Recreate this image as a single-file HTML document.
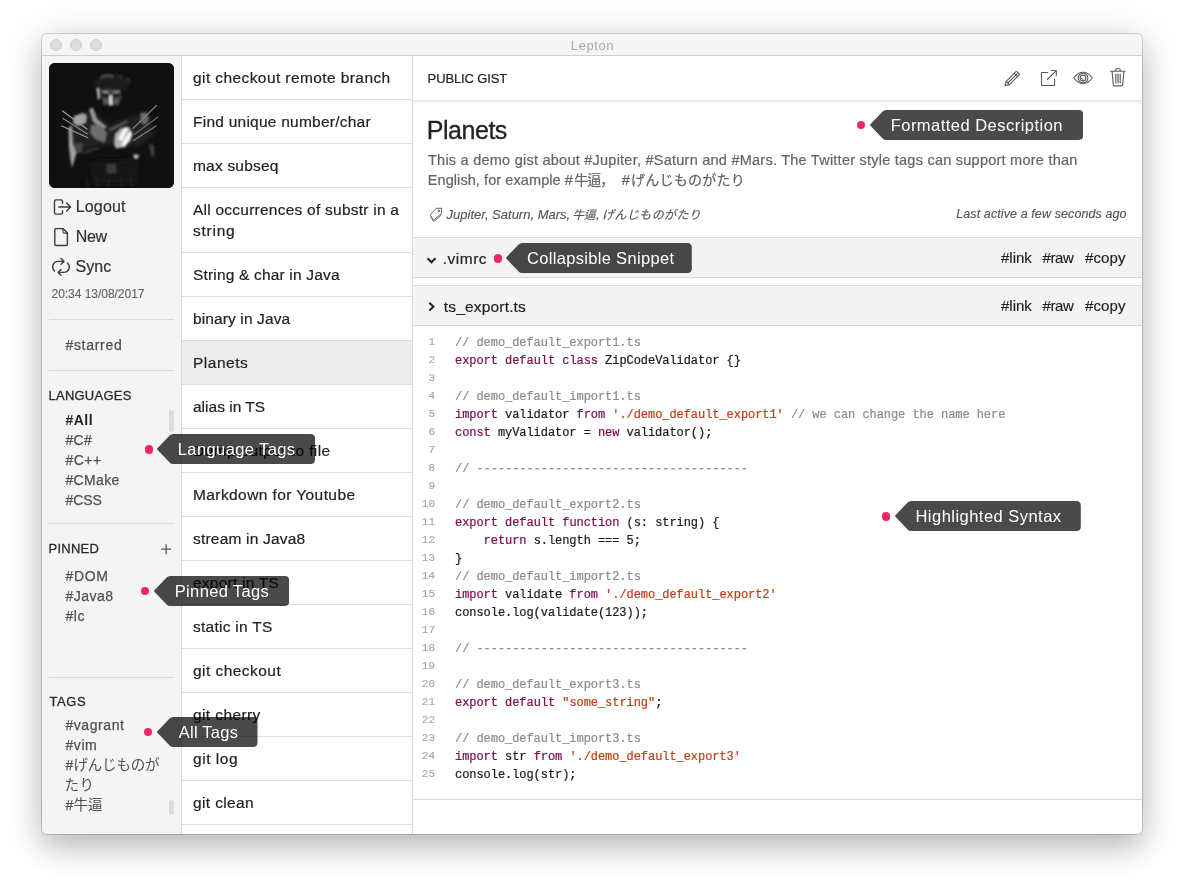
<!DOCTYPE html>
<html lang="en">
<head>
<meta charset="utf-8">
<title>Lepton</title>
<style>
*{box-sizing:border-box;margin:0;padding:0}
html,body{width:1184px;height:884px;background:#fff;overflow:hidden}
body{font-family:"Liberation Sans","Noto Sans CJK JP",sans-serif;color:#222;position:relative;-webkit-font-smoothing:antialiased}
.win{position:absolute;left:42px;top:34px;width:1100px;height:800px;border-radius:5px;background:#f4f4f4;
 box-shadow:0 0 0 1px rgba(0,0,0,.15),0 15px 28px rgba(0,0,0,.17),0 5px 38px rgba(0,0,0,.17);overflow:hidden}
.pg{position:absolute;left:-42px;top:-34px;width:1184px;height:884px;will-change:transform}
.abs{position:absolute}
.titlebar{position:absolute;left:42px;top:34px;width:1100px;height:22px;background:#f5f5f5;border-bottom:1px solid #cfcfcf}
.title{position:absolute;left:42.5px;top:35px;width:1100px;height:22px;line-height:22px;text-align:center;font-size:13px;letter-spacing:.6px;color:#a9a9a9}
.tl{position:absolute;top:39px;width:12px;height:12px;border-radius:50%;background:#dcdcdc;border:1px solid #d0d0d0}
/* sidebar */
.side{position:absolute;left:42px;top:56px;width:139px;height:778px;background:#f4f4f4}
.avatar{position:absolute;left:49px;top:63px;width:125px;height:125px;border-radius:6px;background:#0d0d0d;overflow:hidden}
.act{position:absolute;left:77px;font-size:16px;line-height:20px;color:#333;white-space:nowrap;-webkit-text-stroke:.2px #333}
.time{position:absolute;left:51.5px;top:286px;font-size:12px;line-height:16px;color:#666;letter-spacing:-.03px;-webkit-text-stroke:.15px #666;white-space:nowrap}
.hr{position:absolute;left:49px;width:125px;height:1px;background:#dcdcdc}
.sec{position:absolute;left:48.5px;font-size:13px;line-height:16px;color:#262a30;letter-spacing:.24px;-webkit-text-stroke:.28px #262a30;white-space:nowrap}
.tag{position:absolute;left:65.4px;font-size:14px;-webkit-text-stroke:.25px #505055;line-height:20px;color:#505055;white-space:nowrap}
.cj{font-size:14.5px;-webkit-text-stroke:0}
.thumb{position:absolute;left:169px;width:5px;border-radius:3px;background:#dcdcdc}
/* list */
.list{position:absolute;left:181px;top:56px;width:232px;height:778px;background:#fff;border-left:1px solid #d9d9d9;border-right:1px solid #d9d9d9}
.li{padding:11px 0 11px 11px;font-size:15.5px;line-height:21px;border-bottom:1px solid #ddd;color:#222;letter-spacing:.34px;white-space:nowrap;-webkit-text-stroke:.2px #222}
.li.sel{background:#ececec}
/* main */
.main{position:absolute;left:413px;top:56px;width:729px;height:778px;background:#fff}
.t{position:absolute;white-space:nowrap}
.snip{position:absolute;left:413px;width:729px;height:41px;background:#f3f3f3;border-top:1px solid #d9d9d9;border-bottom:1px solid #d9d9d9}
/* tooltip */
.tip{position:absolute;height:30px;color:#fff;font-size:16.5px;line-height:30px;white-space:nowrap}
.tip svg{position:absolute;left:0;top:0}
.tip span{position:absolute;left:22px;top:0}
.dot{position:absolute;width:8.2px;height:8.2px;border-radius:50%;background:#f0265f}
/* code */
.ln{position:absolute;left:413px;width:22px;text-align:right;font:11px/18px "Liberation Mono",monospace;color:#a6a6a6;-webkit-text-stroke-width:.15px}
.cl{position:absolute;left:455px;font:12px/18px "Liberation Mono",monospace;color:#1c1c1c;white-space:pre;letter-spacing:-.055px;-webkit-text-stroke-width:.22px}
.lk{position:absolute;top:0}
.c{color:#8c8c8c}.k{color:#7a0e48}.s{color:#c0401a}
</style>
</head>
<body>
<div class="win"><div class="pg">
<div class="titlebar"></div>
<div class="title">Lepton</div>
<div class="tl" style="left:50px"></div><div class="tl" style="left:70px"></div><div class="tl" style="left:90px"></div>

<div class="side"></div>
<svg class="avatar" viewBox="0 0 125 125" width="125" height="125">
<defs>
<filter id="b1" x="-30%" y="-30%" width="160%" height="160%"><feGaussianBlur stdDeviation=".8"/></filter>
<filter id="b2" x="-30%" y="-30%" width="160%" height="160%"><feGaussianBlur stdDeviation="2.2"/></filter>
<filter id="b0" x="-30%" y="-30%" width="160%" height="160%"><feGaussianBlur stdDeviation=".4"/></filter>
</defs>
<rect width="125" height="125" fill="#101010"/>
<g filter="url(#b2)">
<path d="M44,18 Q52,11 62,12 Q76,11 82,19 L78,27 L46,27 Z" fill="#1d1d1d"/>
<path d="M26,54 L44,48 L60,62 L82,54 L100,52 L106,72 L88,84 L62,82 L36,86 L20,80 Z" fill="#222"/>
<path d="M40,98 L90,96 L88,122 L44,122 Z" fill="#181818"/>
</g>
<g filter="url(#b1)">
<path d="M51,13 Q58,9.5 65,12.5 L64,15.5 Q58,13.5 52,16 Z" fill="#4a4a4a"/>
<path d="M68.5,12 L74,13 L73.5,15 L68.5,14 Z M77,14.5 L81.5,17 L80.5,19 L77,17 Z" fill="#3a3a3a"/>
<path d="M47.6,25 L50.4,25 L51,35.5 L49,37 Z" fill="#c4c4c4"/>
<path d="M52,27 L60,25.5 L71,27 L72.5,35 L69,43 L61,45 L54,41 Z" fill="#3f3f3f"/>
<path d="M53,27 L60,28.5 L59.5,30.4 L53.4,29.4 Z M64,28.5 L71,27 L70.6,29.4 L64.5,30.4 Z" fill="#8a8a8a"/>
<path d="M53.4,30.6 L60,31.6 L59.4,34 L54,33.4 Z M64,31.6 L70.8,30.6 L70,33.4 L64.6,34 Z" fill="#0c0c0c"/>
<path d="M60.4,32.4 L62.8,32 L63.6,41 L61.4,42.4 L60,40 Z" fill="#dcdcdc"/>
<path d="M53.5,36 L58,37 L58,40.5 L55,40 Z M65,37 L70,36 L68.5,40.4 L65.4,41 Z" fill="#5c5c5c"/>
<path d="M54,42 L68,42 L66,50 L56,50 Z" fill="#0d0d0d"/>
<path d="M25,53 L34,50 L38,52 L37,60 L29,63 L24,60 Z" fill="#a4a4a4"/>
<path d="M40,46 L44,44.5 L48,56 L58,64 L54,66 L44,59 Z" fill="#9a9a9a"/>
<path d="M42,62 L52,62 L58,70 L56,80 L46,76 L41,70 Z" fill="#6e6e6e"/>
<path d="M60,66 L78,57 L79,59 L61,68.5 Z" fill="#5a5a5a"/>
<path d="M66,71 L72,65 L80,64 L83.5,70 L81.5,78 L74,84.5 L66.5,85.5 L65,80 Z" fill="#b0b0b0"/>
<path d="M69,76 L76,64 L79,65.5 L73,78 Z M72,82 L80,69 L83.4,71 L76,84 Z" fill="#fafafa"/>
<path d="M91,50 L98,49 L100,56 L97,62 L92,60 Z" fill="#6a6a6a"/>
<path d="M19.5,64 L23,63 L24,80 L27.5,90 L23,105 L21.4,96 L20,84 Z" fill="#a2a2a2"/>
<path d="M25.5,80 L34,80 L33,90 L27,90 Z" fill="#444"/>
<path d="M34,88 L50,84 L51,86 L35,91 Z" fill="#333"/>
<path d="M84.5,91.6 L89.8,91.6 L89,95.8 L85,95.4 Z" fill="#c0c0c0"/>
<path d="M100,81 L105,82 L105.6,93 L102,93.6 Z" fill="#3c3c3c"/>
<path d="M57,101 L67,101 L67.6,110 L58,110.6 Z" fill="#3e3e3e"/>
<path d="M38,115 L39,124 M48,114 L49,124 M60,116 L60,124 M72,114 L73,124 M82,114 L83,124" stroke="#222" stroke-width="1.6" fill="none"/>
</g>
<g filter="url(#b0)" stroke-linecap="round" fill="none">
<path d="M13.5,48 L38,66" stroke="#a0a0a0" stroke-width="1.2"/>
<path d="M14,55.5 L38.5,71" stroke="#8a8a8a" stroke-width="1.1"/>
<path d="M12.7,63 L39,74.7" stroke="#9a9a9a" stroke-width="1.2"/>
<path d="M107.5,42.5 L84,65.5" stroke="#808080" stroke-width="1.1"/>
<path d="M109,54 L85,71.5" stroke="#707070" stroke-width="1.1"/>
<path d="M107,63 L84.5,77.5" stroke="#808080" stroke-width="1.1"/>
</g>
</svg>
<div class="act" style="top:197px;left:75.75px;letter-spacing:0.15px">Logout</div>
<div class="act" style="top:227px;left:75.75px;letter-spacing:-0.375px">New</div>
<div class="act" style="top:257px;left:75.5px;letter-spacing:0.08px">Sync</div>
<div class="time">20:34 13/08/2017</div>
<div class="hr" style="top:319px"></div>
<div class="tag" style="top:335px;letter-spacing:0.72px;">#starred</div>
<div class="hr" style="top:370px"></div>
<div class="sec" style="top:387.6px;letter-spacing:0.24px;left:48.5px">LANGUAGES</div>
<div class="tag" style="top:410px;letter-spacing:0.53px;font-weight:bold;color:#1d1d28;-webkit-text-stroke:0">#All</div>
<div class="tag" style="top:430px;letter-spacing:0.3px;">#C#</div>
<div class="tag" style="top:450px;letter-spacing:0.53px;">#C++</div>
<div class="tag" style="top:470px;letter-spacing:0.36px;">#CMake</div>
<div class="tag" style="top:490px;letter-spacing:-0.03px;">#CSS</div>
<div class="thumb" style="top:410px;height:21.5px"></div>
<div class="hr" style="top:523px"></div>
<div class="sec" style="top:541px;letter-spacing:0.25px;left:48.5px">PINNED</div>
<div class="tag" style="top:566px;letter-spacing:0.7px;">#DOM</div>
<div class="tag" style="top:586px;letter-spacing:0.52px;">#Java8</div>
<div class="tag" style="top:606px;letter-spacing:0.55px;">#lc</div>
<div class="hr" style="top:677px"></div>
<div class="sec" style="top:693.6px;letter-spacing:0.58px;left:49.5px">TAGS</div>
<div class="tag" style="top:715px;letter-spacing:0.59px;">#vagrant</div>
<div class="tag" style="top:735px;letter-spacing:0.6px;">#vim</div>
<div class="tag" style="top:755px;letter-spacing:0px;">#<span class="cj" style="letter-spacing:-.2px;margin-left:.3px">げんじものが</span></div>
<div class="tag" style="top:775px;letter-spacing:0px;left:64.5px"><span class="cj" style="letter-spacing:.5px">たり</span></div>
<div class="tag" style="top:795px;letter-spacing:0px;">#<span class="cj" style="margin-left:.3px">牛逼</span></div>
<div class="thumb" style="top:800px;height:15px"></div>

<div class="list">
<div class="li" style="letter-spacing:0.41px">git checkout remote branch</div>
<div class="li" style="letter-spacing:0.24px">Find unique number/char</div>
<div class="li" style="letter-spacing:0.2px">max subseq</div>
<div class="li" style="letter-spacing:0.24px">All occurrences of substr in a<br><span style='letter-spacing:.75px'>string</span></div>
<div class="li" style="letter-spacing:0.175px">String &amp; char in Java</div>
<div class="li" style="letter-spacing:0.115px">binary in Java</div>
<div class="li sel" style="letter-spacing:0.5px">Planets</div>
<div class="li" style="letter-spacing:0px">alias in TS</div>
<div class="li" style="letter-spacing:0.39px">Dump output to file</div>
<div class="li" style="letter-spacing:0.41px">Markdown for Youtube</div>
<div class="li" style="letter-spacing:0.2px">stream in Java8</div>
<div class="li" style="letter-spacing:0.23px">export in TS</div>
<div class="li" style="letter-spacing:0.27px">static in TS</div>
<div class="li" style="letter-spacing:0.455px">git checkout</div>
<div class="li" style="letter-spacing:0.39px">git cherry</div>
<div class="li" style="letter-spacing:0.54px">git log</div>
<div class="li" style="letter-spacing:0.375px">git clean</div>
<div class="li" style="letter-spacing:0px">&nbsp;</div>
</div>

<div class="main"></div>
<div class="t" style="left:427.6px;top:70.6px;font-size:13px;line-height:16px;letter-spacing:-.13px;color:#222;-webkit-text-stroke:.2px #222">PUBLIC GIST</div>
<div class="abs" style="left:413px;top:100px;width:729px;height:5px;background:linear-gradient(to bottom,rgba(0,0,0,.125),rgba(0,0,0,.07) 22%,rgba(0,0,0,.03) 55%,rgba(0,0,0,0))"></div>
<div class="t" style="left:426.8px;top:116px;font-size:25px;line-height:28px;letter-spacing:-.47px;color:#222;-webkit-text-stroke:.3px #222">Planets</div>
<div class="t" style="left:428px;top:150px;letter-spacing:.24px;font-size:14.5px;line-height:20px;color:#646469;-webkit-text-stroke:.2px #646469">This a demo gist about #Jupiter, #Saturn and #Mars. The Twitter style tags can support more than</div>
<div class="t" style="left:427.75px;top:170px;letter-spacing:.08px;font-size:14.5px;line-height:20px;color:#646469;-webkit-text-stroke:.2px #646469">English, for example #</div>
<div class="t" style="left:574.3px;top:170px;letter-spacing:-1px;font-size:14.5px;line-height:20px;color:#646469;-webkit-text-stroke:.2px #646469;font-size:14px">牛逼，</div>
<div class="t" style="left:621.8px;top:170px;font-size:14.5px;line-height:20px;color:#646469;-webkit-text-stroke:.2px #646469">#</div>
<div class="t" style="left:631px;top:170px;letter-spacing:.24px;font-size:14.5px;line-height:20px;color:#646469;-webkit-text-stroke:.2px #646469;font-size:14px">げんじものがたり</div>
<div class="t" style="left:446.6px;top:207px;font-size:13px;line-height:16px;font-style:italic;color:#555;-webkit-text-stroke:.15px #555">Jupiter, Saturn, Mars,</div>
<div class="t" style="left:572.6px;top:207px;font-size:11.5px;line-height:16px;font-style:italic;color:#555;-webkit-text-stroke:.15px #555">牛逼<span style="font-size:13px;margin-left:.5px">,</span></div>
<div class="t" style="left:602px;top:207px;font-size:12px;letter-spacing:.41px;line-height:16px;font-style:italic;color:#555;-webkit-text-stroke:.15px #555">げんじものがたり</div>
<div class="t" style="left:956.25px;top:206px;font-size:12.5px;line-height:16px;font-style:italic;color:#555;letter-spacing:.1px;-webkit-text-stroke:.15px #555">Last active a few seconds ago</div>
<div class="snip" style="top:237px"></div>
<div class="t" style="left:442.75px;top:248.5px;font-size:15.5px;line-height:20px;color:#222;letter-spacing:0.5px;-webkit-text-stroke:.2px #222">.vimrc</div>
<div class="t" style="left:0;top:247.5px;font-size:15px;line-height:20px;color:#222;-webkit-text-stroke:.15px #222"><span class="lk" style="left:1001px">#link</span><span class="lk" style="left:1042.5px;letter-spacing:-.4px">#raw</span><span class="lk" style="left:1085px;letter-spacing:.12px">#copy</span></div>
<div class="snip" style="top:285px"></div>
<div class="t" style="left:443.75px;top:296.5px;font-size:15.5px;line-height:20px;color:#222;letter-spacing:0.18px;-webkit-text-stroke:.2px #222">ts_export.ts</div>
<div class="t" style="left:0;top:295.5px;font-size:15px;line-height:20px;color:#222;-webkit-text-stroke:.15px #222"><span class="lk" style="left:1001px">#link</span><span class="lk" style="left:1042.5px;letter-spacing:-.4px">#raw</span><span class="lk" style="left:1085px;letter-spacing:.12px">#copy</span></div>
<div class="ln" style="top:333px">1</div>
<div class="cl" style="top:334px"><span class="c">// demo_default_export1.ts</span></div>
<div class="ln" style="top:351px">2</div>
<div class="cl" style="top:352px"><span class="k">export</span> <span class="k">default</span> <span class="k">class</span> ZipCodeValidator {}</div>
<div class="ln" style="top:369px">3</div>
<div class="ln" style="top:387px">4</div>
<div class="cl" style="top:388px"><span class="c">// demo_default_import1.ts</span></div>
<div class="ln" style="top:405px">5</div>
<div class="cl" style="top:406px"><span class="k">import</span> validator <span class="k">from</span> <span class="s">'./demo_default_export1'</span> <span class="c">// we can change the name here</span></div>
<div class="ln" style="top:423px">6</div>
<div class="cl" style="top:424px"><span class="k">const</span> myValidator = <span class="k">new</span> validator();</div>
<div class="ln" style="top:441px">7</div>
<div class="ln" style="top:459px">8</div>
<div class="cl" style="top:460px"><span class="c">// --------------------------------------</span></div>
<div class="ln" style="top:477px">9</div>
<div class="ln" style="top:495px">10</div>
<div class="cl" style="top:496px"><span class="c">// demo_default_export2.ts</span></div>
<div class="ln" style="top:513px">11</div>
<div class="cl" style="top:514px"><span class="k">export</span> <span class="k">default</span> <span class="k">function</span> (s: string) {</div>
<div class="ln" style="top:531px">12</div>
<div class="cl" style="top:532px">    <span class="k">return</span> s.length === 5;</div>
<div class="ln" style="top:549px">13</div>
<div class="cl" style="top:550px">}</div>
<div class="ln" style="top:567px">14</div>
<div class="cl" style="top:568px"><span class="c">// demo_default_import2.ts</span></div>
<div class="ln" style="top:585px">15</div>
<div class="cl" style="top:586px"><span class="k">import</span> validate <span class="k">from</span> <span class="s">'./demo_default_export2'</span></div>
<div class="ln" style="top:603px">16</div>
<div class="cl" style="top:604px">console.log(validate(123));</div>
<div class="ln" style="top:621px">17</div>
<div class="ln" style="top:639px">18</div>
<div class="cl" style="top:640px"><span class="c">// --------------------------------------</span></div>
<div class="ln" style="top:657px">19</div>
<div class="ln" style="top:675px">20</div>
<div class="cl" style="top:676px"><span class="c">// demo_default_export3.ts</span></div>
<div class="ln" style="top:693px">21</div>
<div class="cl" style="top:694px"><span class="k">export</span> <span class="k">default</span> <span class="s">"some_string"</span>;</div>
<div class="ln" style="top:711px">22</div>
<div class="ln" style="top:729px">23</div>
<div class="cl" style="top:730px"><span class="c">// demo_default_import3.ts</span></div>
<div class="ln" style="top:747px">24</div>
<div class="cl" style="top:748px"><span class="k">import</span> str <span class="k">from</span> <span class="s">'./demo_default_export3'</span></div>
<div class="ln" style="top:765px">25</div>
<div class="cl" style="top:766px">console.log(str);</div>
<div class="abs" style="left:413px;top:799px;width:729px;height:1px;background:#d9d9d9"></div>
<svg class="abs" style="left:0;top:0;pointer-events:none" width="1184" height="884" viewBox="0 0 1184 884" fill="none" stroke-linecap="round" stroke-linejoin="round">
<g stroke="#3c3c3c" stroke-width="1.4">
<!-- logout -->
<path d="M62.5,203.3 V201.5 Q62.5,199.9 60.9,199.9 H56.1 Q54.5,199.9 54.5,201.5 V212.5 Q54.5,214.1 56.1,214.1 H60.9 Q62.5,214.1 62.5,212.5 V210.7"/>
<path d="M58.8,207 H70.3 M66.6,202.9 L70.6,207 L66.6,211.1"/>
<!-- new -->
<path d="M55.9,228.6 H63 L67.4,233.1 V244.4 Q67.4,245.5 66.3,245.5 H55.9 Q54.8,245.5 54.8,244.4 V229.7 Q54.8,228.6 55.9,228.6 Z"/>
<path d="M63,228.8 V232 Q63,233.1 64.1,233.1 H67.2" stroke-width="1.1"/>
<!-- sync -->
<path d="M54.4,271 C51.2,267.4 52.6,261.4 58.4,261.4 H63.6 M61,258.5 L64,261.4 L61,264.3"/>
<path d="M67.5,262.9 C70.8,266.6 69.3,272.4 63.6,272.4 H58.4 M61,269.6 L58.1,272.4 L61,275.2"/>
</g>
<!-- plus -->
<path d="M161.2,549.2 H171.1 M166.15,544.2 V554.2" stroke="#555" stroke-width="1.3" stroke-linecap="butt"/>
<!-- chevrons -->
<path d="M427.5,258.3 L431.5,262.3 L435.5,258.3" stroke="#222" stroke-width="2" stroke-linecap="butt" stroke-linejoin="miter"/>
<path d="M429.3,302.8 L433.4,306.7 L429.3,310.6" stroke="#222" stroke-width="2" stroke-linecap="butt" stroke-linejoin="miter"/>
<!-- tag -->
<g stroke="#666" stroke-width="1">
<path d="M436.6,208.3 H441.5 V213.4 L434.3,219.6 Q433.7,220.1 433.2,219.5 L430.6,215.6 Q430.2,215 430.7,214.5 Z"/>
<path d="M430.6,216.6 L433.2,220.9 Q433.7,221.6 434.3,221.1 L441.5,214.9"/>
<circle cx="438.9" cy="211" r="0.7" fill="#666"/>
</g>
<!-- header icons -->
<g stroke="#5c5c5c" stroke-width="1.1">
<!-- pencil -->
<path d="M1005,85.6 L1006.2,81.4 L1015.6,71.9 Q1016.4,71.1 1017.2,71.9 L1018.9,73.6 Q1019.7,74.4 1018.9,75.2 L1009.4,84.6 Z"/>
<path d="M1006.3,81.5 L1009.3,84.5 M1007.9,83 L1017.2,73.6 M1014.2,73.3 L1017.5,76.6"/>
<!-- share -->
<path d="M1047.6,72.5 H1041.5 V85.5 H1054.6 V79"/>
<path d="M1047.4,79.5 L1056,70.8 M1051.3,70.5 H1056.3 V75.6"/>
<!-- eye -->
<path d="M1073.8,78 Q1078.2,72.3 1083,72.3 Q1087.8,72.3 1092.2,78 Q1087.8,83.7 1083,83.7 Q1078.2,83.7 1073.8,78 Z"/>
<circle cx="1083" cy="78" r="4.9"/>
<circle cx="1083" cy="78" r="2.9"/>
<path d="M1081.4,78 A1.6,1.6 0 0 0 1083,79.6" stroke-width=".9"/>
<!-- trash -->
<path d="M1110.6,71.3 H1125.3 M1115.5,71 Q1115.5,68.5 1118,68.5 Q1120.5,68.5 1120.5,71"/>
<path d="M1112.1,71.6 L1113.3,84.6 Q1113.4,85.9 1114.7,85.9 H1121.3 Q1122.6,85.9 1122.7,84.6 L1123.9,71.6"/>
<path d="M1115.6,74.2 V83 M1117.2,74.2 V83 M1118.8,74.2 V83 M1120.4,74.2 V83" stroke-width=".9"/>
</g>
</svg>
<div class="dot" style="left:856.9px;top:120.9px"></div><div class="tip" style="left:869.7px;top:110px;width:213.3px"><svg width="213.3" height="30" viewBox="0 0 213.3 30"><path d="M0.2,15.6 Q-0.2,15 0.2,14.4 L12.6,1.5 Q14,0 16.2,0 L208.8,0 Q213.3,0 213.3,4.5 L213.3,25.5 Q213.3,30 208.8,30 L16.2,30 Q14,30 12.6,28.5 Z" fill="rgba(0,0,0,.71)"/></svg><span style="left:21.0px;letter-spacing:0.475px">Formatted Description</span></div>
<div class="dot" style="left:493.5px;top:254.4px"></div><div class="tip" style="left:506.2px;top:243px;width:185.8px"><svg width="185.8" height="30" viewBox="0 0 185.8 30"><path d="M0.2,15.6 Q-0.2,15 0.2,14.4 L12.6,1.5 Q14,0 16.2,0 L181.3,0 Q185.8,0 185.8,4.5 L185.8,25.5 Q185.8,30 181.3,30 L16.2,30 Q14,30 12.6,28.5 Z" fill="rgba(0,0,0,.71)"/></svg><span style="left:20.8px;letter-spacing:0.32px">Collapsible Snippet</span></div>
<div class="dot" style="left:144.65px;top:445.4px"></div><div class="tip" style="left:157px;top:434px;width:158px"><svg width="158" height="30" viewBox="0 0 158 30"><path d="M0.2,15.6 Q-0.2,15 0.2,14.4 L12.6,1.5 Q14,0 16.2,0 L153.5,0 Q158,0 158,4.5 L158,25.5 Q158,30 153.5,30 L16.2,30 Q14,30 12.6,28.5 Z" fill="rgba(0,0,0,.71)"/></svg><span style="left:20.75px;letter-spacing:0.4px">Language Tags</span></div>
<div class="dot" style="left:881.9px;top:512.4px"></div><div class="tip" style="left:895.2px;top:501px;width:185.8px"><svg width="185.8" height="30" viewBox="0 0 185.8 30"><path d="M0.2,15.6 Q-0.2,15 0.2,14.4 L12.6,1.5 Q14,0 16.2,0 L181.3,0 Q185.8,0 185.8,4.5 L185.8,25.5 Q185.8,30 181.3,30 L16.2,30 Q14,30 12.6,28.5 Z" fill="rgba(0,0,0,.71)"/></svg><span style="left:20.3px;letter-spacing:0.47px">Highlighted Syntax</span></div>
<div class="dot" style="left:140.9px;top:586.9px"></div><div class="tip" style="left:153.7px;top:576px;width:135.3px"><svg width="135.3" height="30" viewBox="0 0 135.3 30"><path d="M0.2,15.6 Q-0.2,15 0.2,14.4 L12.6,1.5 Q14,0 16.2,0 L130.8,0 Q135.3,0 135.3,4.5 L135.3,25.5 Q135.3,30 130.8,30 L16.2,30 Q14,30 12.6,28.5 Z" fill="rgba(0,0,0,.71)"/></svg><span style="left:21.05px;letter-spacing:0.35px">Pinned Tags</span></div>
<div class="dot" style="left:144.15px;top:727.9px"></div><div class="tip" style="left:157px;top:717px;width:100.5px"><svg width="100.5" height="30" viewBox="0 0 100.5 30"><path d="M0.2,15.6 Q-0.2,15 0.2,14.4 L12.6,1.5 Q14,0 16.2,0 L96.0,0 Q100.5,0 100.5,4.5 L100.5,25.5 Q100.5,30 96.0,30 L16.2,30 Q14,30 12.6,28.5 Z" fill="rgba(0,0,0,.71)"/></svg><span style="left:21.75px;letter-spacing:0.25px">All Tags</span></div>
</div></div>
</body>
</html>
